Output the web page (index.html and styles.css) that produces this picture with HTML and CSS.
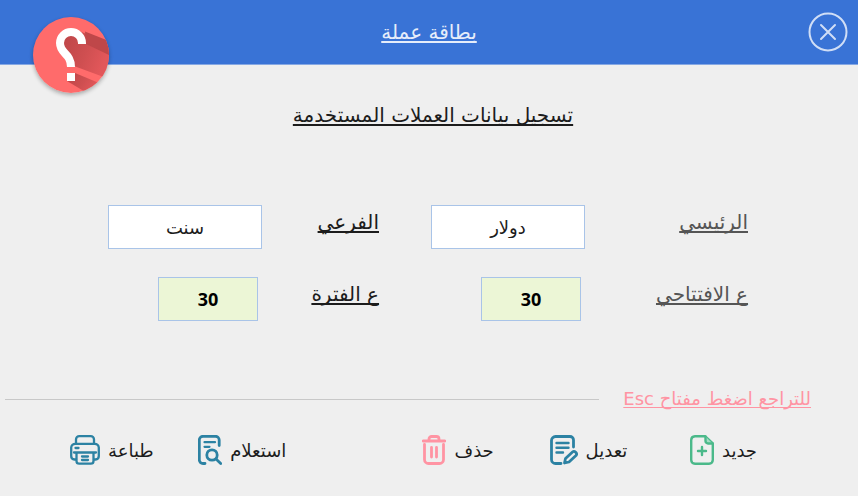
FILE: index.html
```html
<!DOCTYPE html>
<html lang="ar" dir="rtl">
<head>
    <meta charset="UTF-8">
    <meta name="viewport" content="width=device-width, initial-scale=1.0">
    <title>بطاقة عملة</title>
    <link rel="stylesheet" href="styles.css">
</head>
<body>
    <header class="header">
        <h1 class="title">بطاقة عملة</h1>
        <button class="close-btn" type="button" aria-label="إغلاق">
            <svg width="40" height="40" viewBox="0 0 40 40" fill="none" stroke="#d0def6" stroke-linecap="round">
                <circle cx="20" cy="20" r="18.5" stroke-width="2"/>
                <path d="M13 13l14 14M27 13L13 27" stroke-width="2"/>
            </svg>
        </button>
        <button class="help-btn" type="button" aria-label="مساعدة">
            <svg width="76" height="76" viewBox="0 0 76 76">
                <defs>
                    <clipPath id="disc"><circle cx="38" cy="38" r="38"/></clipPath>
                    <linearGradient id="shade" x1="0" y1="0" x2="1" y2="0.4">
                        <stop offset="0" stop-color="#bc4547"/>
                        <stop offset="0.6" stop-color="#cf4f51"/>
                        <stop offset="1" stop-color="#e2575a"/>
                    </linearGradient>
                </defs>
                <circle cx="38" cy="38" r="38" fill="#ff6b6b"/>
                <g clip-path="url(#disc)" fill="url(#shade)">
                    <path d="M46 14L76 26V62L41 49L28 32L30 22Z"/>
                    <path d="M42 56L66 66L54 76L34 64Z"/>
                    <path d="M52 14.500L76 24V38L53 27Z" fill="#bf4749"/>
                </g>
                <path d="M49 27V26A11 11 0 0 0 27 26C27 37 38 36 38 50" fill="none" stroke="#fff" stroke-width="8"/>
                <rect x="34" y="56" width="8" height="8" fill="#fff"/>
            </svg>
        </button>
    </header>

    <main class="content">
        <h2 class="subtitle">تسجيل بيانات العملات المستخدمة</h2>

        <form class="form">
            <label class="label muted" for="main">الرئيسي</label>
            <input class="field" id="main" type="text" value="دولار">
            <label class="label" for="sub">الفرعي</label>
            <input class="field" id="sub" type="text" value="سنت">

            <label class="label muted" for="opening">ع الافتتاحي</label>
            <input class="field rate" id="opening" type="text" value="30">
            <label class="label" for="period">ع الفترة</label>
            <input class="field rate" id="period" type="text" value="30">
        </form>
    </main>

    <footer class="footer">
        <div class="hint-row">
            <span class="hint">للتراجع اضغط مفتاح Esc</span>
            <hr class="line">
        </div>

        <div class="actions">
            <button class="action" type="button">
                جديد
                <svg width="24" height="30" viewBox="0 0 24 30" fill="none" stroke="#4bb98a" stroke-width="2.4" stroke-linecap="round" stroke-linejoin="round">
                    <path d="M15 1.2H5A4 4 0 0 0 1.2 5V25A4 4 0 0 0 5 28.8H19A4 4 0 0 0 22.8 25V8.5Z"/>
                    <path d="M15.5 1.5V6A2.5 2.5 0 0 0 18 8.5H22.5" fill="#a4dcc4"/>
                    <path d="M12 12V20M8 16H16"/>
                </svg>
            </button>
            <button class="action" type="button">
                تعديل
                <svg width="28" height="30" viewBox="0 0 28 30" fill="none" stroke="#2c82a3" stroke-width="2.8" stroke-linecap="round" stroke-linejoin="round">
                    <path d="M11 28.5H5.5A4 4 0 0 1 1.5 24.5V5.5A4 4 0 0 1 5.5 1.5H20A3.5 3.5 0 0 1 23.5 5V12"/>
                    <path d="M6.5 8H18.5M6.5 12.7H18.5M6.5 17.5H13" stroke-width="2.4"/>
                    <path d="M14.5 28L15.5 23.5L22.5 17C24.5 15.2 27.8 18.4 26 20.5L19 27Z"/>
                </svg>
            </button>
            <button class="action" type="button">
                حذف
                <svg width="24" height="30" viewBox="0 0 24 30" fill="none" stroke="#ff94a3" stroke-width="2.8" stroke-linecap="round" stroke-linejoin="round">
                    <path d="M1.3 6H22.7M7 5.5V4A2.5 2.5 0 0 1 9.5 1.5H14.5A2.5 2.5 0 0 1 17 4V5.5"/>
                    <path d="M2.5 9.5V24.5A4 4 0 0 0 6.5 28.5H17.5A4 4 0 0 0 21.5 24.5V9.5"/>
                    <path d="M9.5 12.5V22M14.5 12.5V22"/>
                </svg>
            </button>
            <button class="action" type="button">
                استعلام
                <svg width="24" height="30" viewBox="0 0 24 30" fill="none" stroke="#2c82a3" stroke-width="2.8" stroke-linecap="round" stroke-linejoin="round">
                    <path d="M7 28.5H5A3.7 3.7 0 0 1 1.3 24.8V5A3.7 3.7 0 0 1 5 1.3H17.5A3.7 3.7 0 0 1 21.2 5V10.5"/>
                    <path d="M6.5 7.2H17M6.5 11.8H11.5" stroke-width="2.2"/>
                    <circle cx="14" cy="20" r="5.2"/>
                    <path d="M18 24L22.7 28.5"/>
                </svg>
            </button>
            <button class="action" type="button">
                طباعة
                <svg width="30" height="30" viewBox="0 0 30 30" fill="none" stroke="#2c82a3" stroke-width="2.3" stroke-linecap="round" stroke-linejoin="round">
                    <path d="M6 8.5V4.5A3.3 3.3 0 0 1 9.3 1.2H20.7A3.3 3.3 0 0 1 24 4.5V8.5"/>
                    <path d="M6 24.5H4.5A3.5 3.5 0 0 1 1.2 21V12.5A4 4 0 0 1 5.2 8.8H24.8A4 4 0 0 1 28.8 12.5V21A3.5 3.5 0 0 1 25.5 24.5H24"/>
                    <path d="M4 17.5H26M6.5 17.5V26A2.7 2.7 0 0 0 9.2 28.7H20.8A2.7 2.7 0 0 0 23.5 26V17.5M5.5 13H8.5M12 21.5H18M12 25H18"/>
                </svg>
            </button>
        </div>
    </footer>
</body>
</html>
```

FILE: styles.css
```css
* {
    box-sizing: border-box;
}

body {
    display: flex;
    flex-direction: column;
    min-height: 100vh;
    margin: 0;
    font-family: "DejaVu Sans", sans-serif;
    font-size: 18px;
    color: #1c1c1c;
    background-color: #efefef;
}

button {
    padding: 0;
    border: none;
    background: none;
    color: inherit;
    font: inherit;
    cursor: pointer;
}

svg {
    display: block;
    flex: none;
}

.title,
.subtitle,
.label,
.hint {
    font-size: 20px;
    font-weight: normal;
    text-decoration: underline;
    text-decoration-thickness: 2px;
    text-decoration-skip-ink: none;
    text-underline-offset: 2px;
}

/* Header */
.header {
    position: relative;
    display: flex;
    align-items: center;
    justify-content: center;
    height: 65px;
    color: #e6edfa;
    background-color: #3973d6;
    border-bottom: 1px solid #86a8e3;
}

.title {
    margin: 0;
}

.close-btn {
    position: absolute;
    top: 12px;
    right: 10px;
}

.help-btn {
    position: absolute;
    top: 17px;
    left: 33px;
    border-radius: 50%;
    box-shadow: 0 2px 4px rgba(0, 0, 0, 0.3);
}

/* Form */
.content {
    flex: 1;
    padding: 38px 110px 0 108px;
}

.subtitle {
    margin: 0 0 78px;
    padding-left: 10px;
    line-height: 24px;
    text-align: center;
}

.form {
    display: grid;
    grid-template-columns: 163fr 206fr 117fr 154fr;
    row-gap: 28px;
}

.label {
    justify-self: start;
    line-height: 34px;
}

.muted {
    color: #555;
}

.field {
    width: 100%;
    max-width: 154px;
    height: 44px;
    padding: 0;
    border: 1px solid #a9c4e8;
    background-color: #fff;
    color: #1c1c1c;
    font: inherit;
    text-align: center;
}

.rate {
    width: 100px;
    margin-right: 4px;
    background-color: #ecf6d6;
    color: #000;
    font-family: "Open Sans", sans-serif;
    font-weight: bold;
}

/* Footer */
.hint-row {
    display: flex;
    align-items: center;
    gap: 24px;
    padding: 0 47px 0 5px;
}

.hint {
    color: #ff94a3;
    font-size: 18px;
    line-height: 28px;
    text-decoration-thickness: 1px;
}

.line {
    flex: 1;
    margin: 0;
    border: none;
    border-top: 1px solid #c8c8c8;
}

.actions {
    display: grid;
    grid-template-columns: 130fr 134fr 208fr 133fr 82fr;
    padding: 22px 101px 31px 70px;
}

.action {
    display: flex;
    align-items: center;
    justify-self: start;
    gap: 8px;
    white-space: nowrap;
}
```
